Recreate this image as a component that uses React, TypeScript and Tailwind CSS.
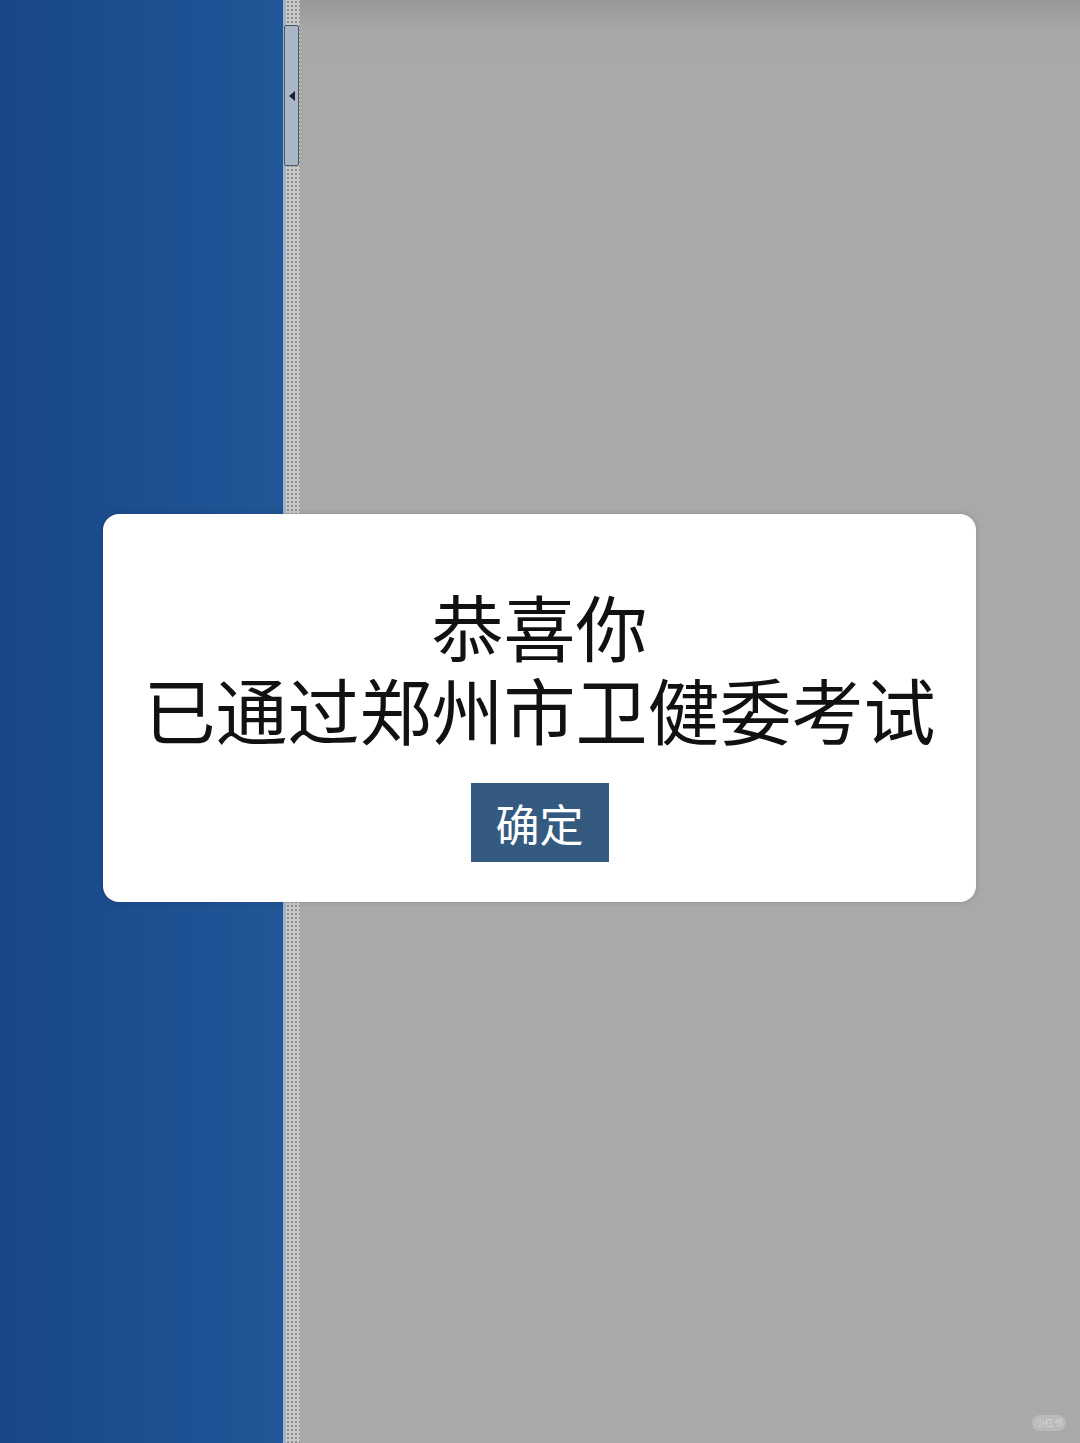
import React from "react";

export default function App() {
  return (
    <div
      className="relative w-[1080px] h-[1443px] overflow-hidden flex"
      style={{ fontFamily: '"Noto Sans CJK SC", "Noto Sans", sans-serif' }}
    >
      {/* left blue panel */}
      <div className="w-[283px] h-full bg-gradient-to-r from-[#194686] via-[#1c4e90] to-[#215697]" />
      {/* light edge */}
      <div className="w-[3px] h-full bg-[#9fb3c9]" />
      {/* splitter */}
      <div className="relative w-[14px] h-full bg-[#c9c9c9] bg-[radial-gradient(circle,#8e8e8e_1px,transparent_1.2px)] bg-[length:4px_4px]">
        <div className="absolute left-[-2px] top-[25px] w-[15px] h-[141px] rounded-[2px] border border-[#4a5566] bg-[#a9b6c6] flex items-center justify-center">
          <div className="w-0 h-0 border-y-[5px] border-y-transparent border-r-[6px] border-r-[#1c2430]" />
        </div>
      </div>
      {/* gray content */}
      <div className="flex-1 h-full bg-gradient-to-b from-[#989898] via-[#a8a8a8] to-[#a9a9a9] bg-[length:100%_60px] bg-no-repeat bg-[#a9a9a9]" />

      {/* dialog */}
      <div className="absolute left-[103px] top-[514px] w-[873px] h-[388px] bg-white rounded-[16px] shadow-[0_0_6px_rgba(0,0,0,0.15)] flex flex-col items-center">
        <div className="mt-[75px] flex flex-col items-center gap-[11px] text-[72px] text-[#111] text-center">
          <div className="h-[72px] leading-[72px]">恭喜你</div>
          <div className="h-[72px] leading-[72px]">已通过郑州市卫健委考试</div>
        </div>
        <button className="mt-[39px] w-[138px] h-[79px] bg-[#355a80] text-white text-[44px] leading-none flex items-center justify-center">
          确定
        </button>
      </div>

      {/* watermark */}
      <div className="absolute right-[14px] bottom-[12px] w-[34px] h-[16px] rounded-full bg-white/20 text-white/40 text-[9px] leading-[16px] text-center">
        小红书
      </div>
    </div>
  );
}
